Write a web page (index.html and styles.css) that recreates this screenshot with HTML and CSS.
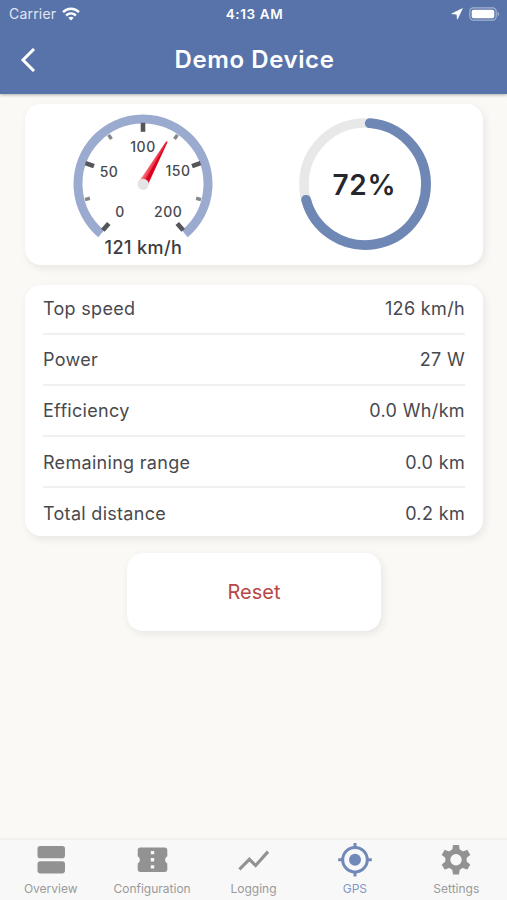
FILE: index.html
```html
<!DOCTYPE html>
<html lang="en">
<head>
    <meta charset="UTF-8">
    <meta name="viewport" content="width=device-width, initial-scale=1.0">
    <title>Demo Device</title>
    <link rel="stylesheet" href="styles.css">
</head>
<body>
    <header class="header">
        <div class="status-bar">
            <div class="status-left">
                <span class="carrier">Carrier</span>
                <svg class="wifi" width="18" height="14" viewBox="0 0 18 14" fill="none" stroke="#fff" stroke-width="2.5">
                    <path d="M1 5.2C5.5 .6 12.5 .6 17 5.2"/>
                    <path d="M4.1 8.5C7 5.7 11 5.7 13.9 8.5"/>
                    <path d="M9 13.5L6.3 10.7C7.9 9.3 10.1 9.3 11.7 10.7Z" fill="#fff" stroke="none"/>
                </svg>
            </div>
            <span class="time">4:13 AM</span>
            <div class="status-right">
                <svg width="12" height="12" viewBox="0 0 12 12" fill="#fff" stroke="#fff" stroke-width=".6" stroke-linejoin="round"><path d="M11.4 .6L.8 5.7L5.8 6.2L6.4 11.2Z"/></svg>
                <svg width="31" height="14" viewBox="0 0 31 14">
                    <rect x=".8" y=".8" width="26.4" height="12.4" rx="3.6" fill="none" stroke="#a4b4d3" stroke-width="1.2"/>
                    <rect x="2.7" y="2.7" width="22.6" height="8.6" rx="1.8" fill="#fff"/>
                    <path d="M28.6 4.8C30.6 5.6 30.6 8.4 28.6 9.2Z" fill="#a4b4d3"/>
                </svg>
            </div>
        </div>
        <div class="nav-bar">
            <svg class="back" width="16" height="24" viewBox="0 0 16 24" fill="none" stroke="#fff" stroke-width="3"><path d="M14 1L3 12L14 23"/></svg>
            <h1 class="title">Demo Device</h1>
        </div>
    </header>

    <main class="content">
        <section class="card gauges">
            <svg class="speed" width="140" height="150" viewBox="0 0 140 150">
                <defs>
                    <linearGradient id="needle" x1="0" y1="0" x2="1" y2="0">
                        <stop offset="0" stop-color="#f58a96"/>
                        <stop offset=".5" stop-color="#ee2840"/>
                        <stop offset=".55" stop-color="#d9001c"/>
                        <stop offset="1" stop-color="#e2001f"/>
                    </linearGradient>
                </defs>
                <path d="M28.2 119.8A65 65 0 1 1 111.8 119.8" fill="none" stroke="#9baacf" stroke-width="9"/>
                <!-- major ticks, 70 degrees apart -->
                <g stroke="#55565a" stroke-width="4.6">
                    <path d="M70 8.8v9"/>
                    <path d="M70 8.8v9" transform="rotate(70 70 70)"/>
                    <path d="M70 8.8v9" transform="rotate(-70 70 70)"/>
                    <path d="M70 8.8v9" transform="rotate(139 70 70)"/>
                    <path d="M70 8.8v9" transform="rotate(-139 70 70)"/>
                </g>
                <g stroke="#85868a" stroke-width="3.4">
                    <path d="M70 10v5" transform="rotate(35 70 70)"/>
                    <path d="M70 10v5" transform="rotate(-35 70 70)"/>
                    <path d="M70 10v5" transform="rotate(105 70 70)"/>
                    <path d="M70 10v5" transform="rotate(-105 70 70)"/>
                </g>
                <g class="scale">
                    <text x="47" y="102.5">0</text>
                    <text x="36" y="62.5">50</text>
                    <text x="70" y="38.3">100</text>
                    <text x="105" y="61.8">150</text>
                    <text x="95.2" y="102.5">200</text>
                </g>
                <path d="M65.2 70L69.1 22Q70 20.2 70.9 22L74.8 70Z" fill="url(#needle)" transform="rotate(29.4 70 70)"/>
                <circle cx="70.2" cy="70.3" r="5.6" fill="#e4e4e5"/>
                <text class="speed-value" x="70.4" y="139.5">121 km/h</text>
            </svg>
            <svg class="battery" width="132" height="132" viewBox="0 0 132 132">
                <circle cx="66" cy="66" r="61" fill="none" stroke="#e8e8e8" stroke-width="9.6"/>
                <path d="M70.8 5.2A61 61 0 1 1 7.1 81.8" fill="none" stroke="#6f87b4" stroke-width="9.8" stroke-linecap="round"/>
                <text class="battery-value" x="65.5" y="76.5">72%</text>
            </svg>
        </section>

        <section class="card stats">
            <div class="row"><span>Top speed</span><span class="value">126 km/h</span></div>
            <div class="row"><span>Power</span><span class="value">27 W</span></div>
            <div class="row"><span>Efficiency</span><span class="value">0.0 Wh/km</span></div>
            <div class="row"><span>Remaining range</span><span class="value">0.0 km</span></div>
            <div class="row"><span>Total distance</span><span class="value">0.2 km</span></div>
        </section>

        <button class="card reset">Reset</button>
    </main>

    <nav class="tabs">
        <a class="tab">
            <svg width="36" height="36" viewBox="0 0 36 36" fill="#929292"><rect x="4.5" y="4" width="27.5" height="12.2" rx="2.8"/><rect x="4.5" y="19.2" width="27.5" height="12.2" rx="2.8"/></svg>
            <span>Overview</span>
        </a>
        <a class="tab">
            <svg width="36" height="36" viewBox="0 0 36 36">
                <path d="M6.4 5.4H30.6Q33.3 5.4 33.3 8.1V14.2A4 4 0 0 0 33.3 21.4V27.3Q33.3 30 30.6 30H6.4Q3.7 30 3.7 27.3V21.4A4 4 0 0 0 3.7 14.2V8.1Q3.7 5.4 6.4 5.4Z" fill="#929292"/>
                <path d="M16.8 8.9h3.4v3.4h-3.4zM16.8 16.1h3.4v3.4h-3.4zM16.8 23.2h3.4v3.4h-3.4z" fill="#f8f8f8"/>
            </svg>
            <span>Configuration</span>
        </a>
        <a class="tab">
            <svg width="36" height="36" viewBox="0 0 36 36" fill="none" stroke="#929292" stroke-width="3.1"><path d="M4.4 27.3L14.4 17.3L20.6 23.5L33 9.6"/></svg>
            <span>Logging</span>
        </a>
        <a class="tab active">
            <svg width="36" height="36" viewBox="0 0 36 36" fill="none" stroke="#7189b9" stroke-width="3">
                <circle cx="18" cy="17.7" r="12.3"/>
                <circle cx="18" cy="17.7" r="6" fill="#7189b9" stroke="none"/>
                <path d="M18 .9V6M18 29.5V34.5M1.2 17.7H6M30 17.7H34.8"/>
            </svg>
            <span>GPS</span>
        </a>
        <a class="tab">
            <svg width="36" height="36" viewBox="0 0 36 36" fill="none" stroke="#929292">
                <circle cx="18" cy="17.7" r="8.2" stroke-width="5"/>
                <!-- six teeth around the ring -->
                <g fill="#929292" stroke-width="1.2" stroke-linejoin="round">
                    <path id="tooth" d="M15.5 3.5H20.5L21.3 9H14.7Z"/>
                    <use href="#tooth" transform="rotate(60 18 17.7)"/>
                    <use href="#tooth" transform="rotate(120 18 17.7)"/>
                    <use href="#tooth" transform="rotate(180 18 17.7)"/>
                    <use href="#tooth" transform="rotate(240 18 17.7)"/>
                    <use href="#tooth" transform="rotate(300 18 17.7)"/>
                </g>
            </svg>
            <span>Settings</span>
        </a>
    </nav>
</body>
</html>
```
FILE: styles.css
```css
* {
    box-sizing: border-box;
}

body {
    margin: 0;
    height: 900px;
    display: flex;
    flex-direction: column;
    background-color: #faf9f6;
    color: #48494e;
    font-family: Inter, sans-serif;
    overflow: hidden;
}

svg {
    display: block;
}

.header {
    height: 94px;
    background-color: #5873a9;
    color: #fff;
    box-shadow: 0 1px 3px rgba(0, 0, 0, 0.3);
}

.status-bar {
    height: 27px;
    padding: 0 7px 0 9px;
    display: grid;
    grid-template-columns: 1fr auto 1fr;
    align-items: center;
    font-size: 13.5px;
}

.status-left,
.status-right {
    display: flex;
    align-items: center;
    gap: 6px;
}

.carrier {
    color: #e0e7f4;
    font-size: 14px;
    letter-spacing: 0.2px;
}

.time {
    font-weight: 600;
    letter-spacing: 0.6px;
}

.status-right {
    justify-content: flex-end;
}

.nav-bar {
    height: 65px;
    padding: 0 20px;
    display: grid;
    grid-template-columns: 16px 1fr 16px;
    align-items: center;
}

.title {
    margin: 0 0 0 2px;
    text-align: center;
    font-size: 24px;
    font-weight: 600;
    letter-spacing: 0.6px;
}

.content {
    flex: 1;
    padding: 10px 24px 0 25px;
    display: flex;
    flex-direction: column;
}

.card {
    background-color: #fff;
    border-radius: 16px;
    box-shadow: 2px 3px 8px rgba(0, 0, 0, 0.08);
}

.gauges {
    height: 161px;
    padding: 10px 52px 0 48px;
    display: flex;
    justify-content: space-between;
}

.battery {
    margin-top: 4px;
}

.gauges text {
    text-anchor: middle;
}

.scale {
    font-size: 14px;
    font-weight: 500;
    letter-spacing: 0.5px;
    fill: #48494e;
}

.speed-value {
    font-size: 18px;
    font-weight: 500;
    letter-spacing: 0.4px;
    fill: #3b3c41;
}

.battery-value {
    font-size: 28px;
    font-weight: 600;
    letter-spacing: 0.8px;
    fill: #26272e;
}

.stats {
    height: 251px;
    margin-top: 20px;
    padding: 0 18px;
}

.row {
    height: 51.3px;
    padding-top: 1px;
    display: flex;
    justify-content: space-between;
    align-items: center;
    border-bottom: 2px solid #f0f0f0;
    font-size: 18px;
    letter-spacing: 0.3px;
}

.row:first-child {
    height: 49.5px;
    padding-top: 0;
}

.row:last-child {
    height: 50px;
    padding: 0;
    border-bottom: none;
}

.value {
    letter-spacing: 0.35px;
}

.reset {
    width: 254px;
    height: 78px;
    margin: 17px auto 0 102px;
    border: none;
    color: #b94744;
    font-family: inherit;
    font-size: 20px;
}

.tabs {
    height: 62px;
    display: grid;
    grid-template-columns: repeat(5, 1fr);
    background-color: #f8f8f8;
    border-top: 2px solid #f0f0ef;
    color: #9a9a9b;
    font-size: 12px;
}

.tab {
    padding-top: 2px;
    display: flex;
    flex-direction: column;
    align-items: center;
    gap: 3px;
}

.tab.active {
    color: #8098c5;
}
```
